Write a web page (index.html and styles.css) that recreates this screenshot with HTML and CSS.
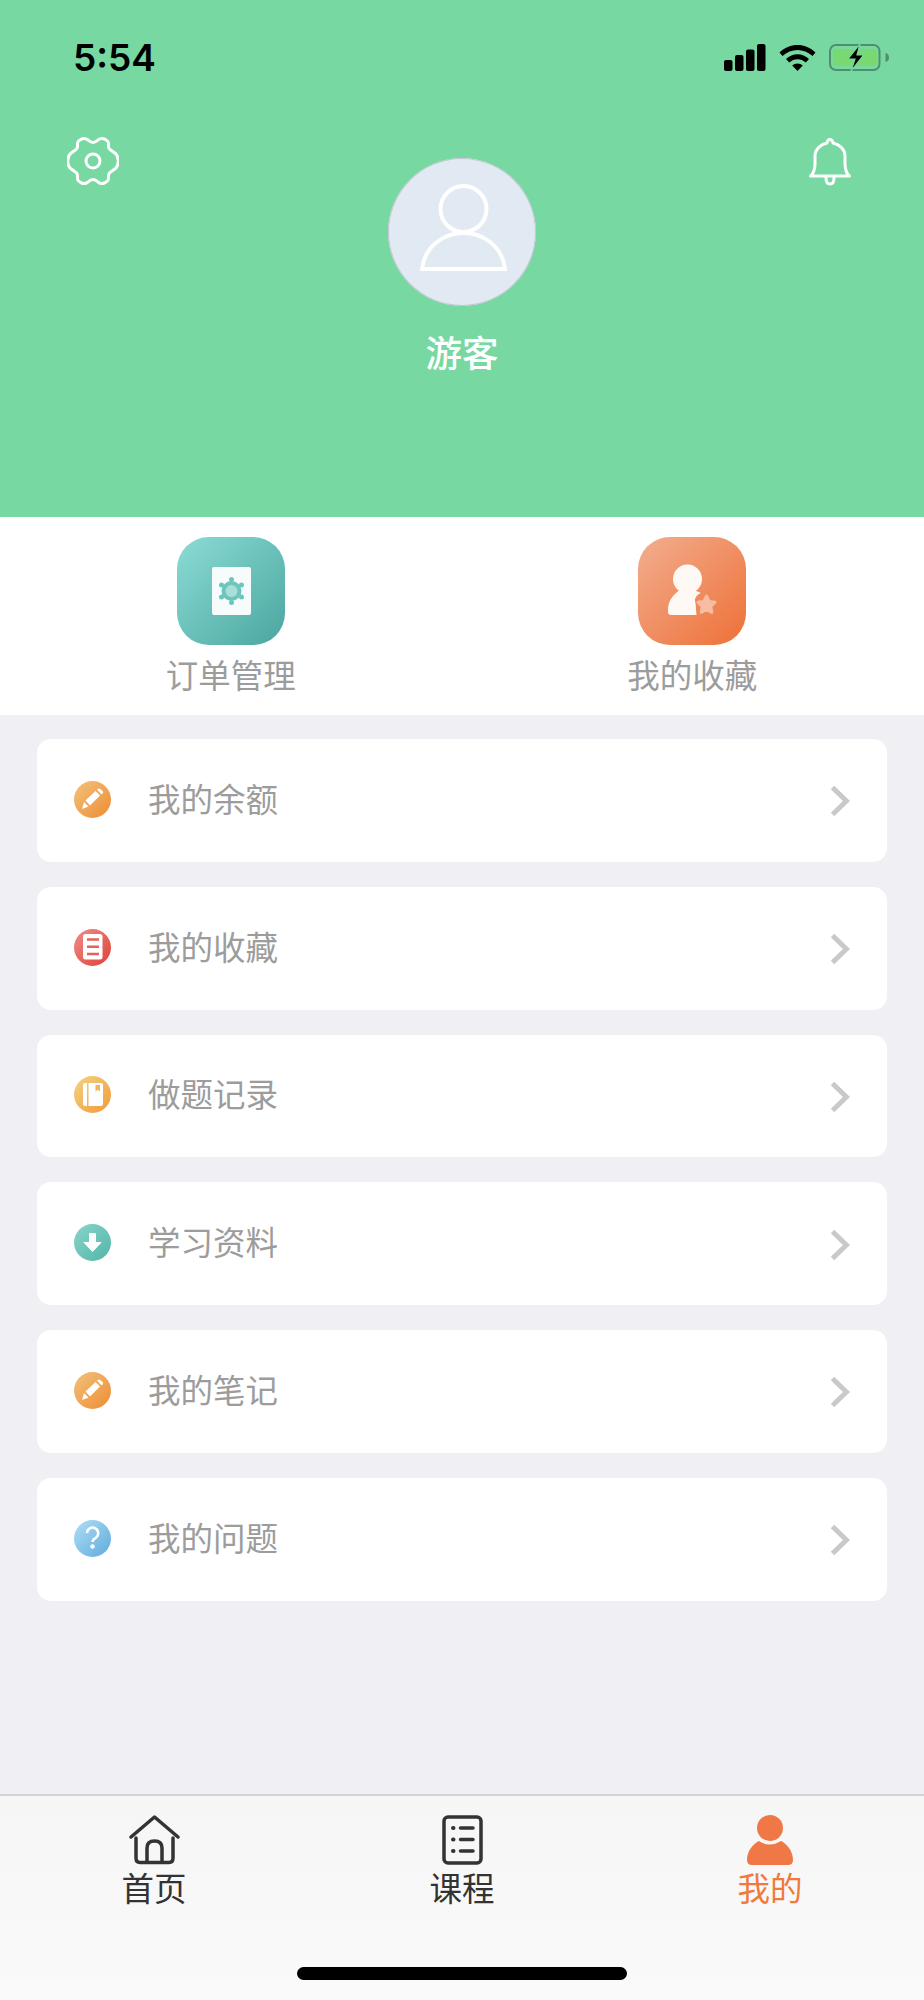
FILE: index.html
```html
<!DOCTYPE html>
<html lang="zh">
<head>
<meta charset="utf-8">
<title>我的</title>
<link rel="stylesheet" href="styles.css">
</head>
<body>
<div class="page">
  <header class="hero">
    <div class="status">
      <span class="time">5:54</span>
      <div class="status-icons">
        <svg class="ic-signal" width="42" height="27" viewBox="0 0 42 27"><rect x="0" y="16" width="8.500" height="11" rx="2"/><rect x="11" y="11" width="8.500" height="16" rx="2"/><rect x="22" y="5.500" width="8.500" height="21.500" rx="2"/><rect x="33" y="0" width="8.500" height="27" rx="2"/></svg>
        <svg class="ic-wifi" width="37" height="27" viewBox="0 0 37 27"><path d="M0.500 8.500C10.500 -1.500 26.500 -1.500 36.500 8.500L33.500 12C25 4 12 4 3.500 12Z"/><path d="M7 15C13.500 8.500 23.500 8.500 30 15L26.800 18.500C22 14 15 14 10.200 18.500Z"/><path d="M13.200 21.500C16 18.700 21 18.700 23.800 21.500L18.500 27Z"/></svg>
        <svg class="ic-battery" width="60" height="27" viewBox="0 0 60 27"><rect x="1" y="1" width="49.500" height="25" rx="6" fill="none" stroke="#4f8f6e" stroke-width="2"/><rect x="4" y="5" width="44" height="17" rx="2.500" fill="#7ad870"/><path d="M56.500 9C58.500 9.500 60 11 60 13.500C60 16 58.500 17.500 56.500 18Z" fill="#4f8f6e"/><path d="M31 0L19 15H26L22 27L34.500 11H28Z" fill="#000" stroke="#77d8a2" stroke-width="1.200"/></svg>
      </div>
    </div>
    <div class="hero-row">
      <svg class="ic-gear" width="52" height="50" viewBox="-26 -25 52 50"><path d="M0 -18.500Q2.500 -18.500 5 -21Q8 -23.500 11.500 -22L13.500 -20.800Q16 -19.300 15.500 -16.300Q15 -12.500 18 -10.800L22.500 -7.500Q25.300 -4.500 25.300 0Q25.300 4.500 22.500 7.500L18 10.800Q15 12.500 15.500 16.300Q16 19.300 13.500 20.800L11.500 22Q8 23.500 5 21Q2.500 18.500 0 18.500Q-2.500 18.500 -5 21Q-8 23.500 -11.500 22L-13.500 20.800Q-16 19.300 -15.500 16.300Q-15 12.500 -18 10.800L-22.500 7.500Q-25.300 4.500 -25.300 0Q-25.300 -4.500 -22.500 -7.500L-18 -10.800Q-15 -12.500 -15.500 -16.300Q-16 -19.300 -13.500 -20.800L-11.500 -22Q-8 -23.500 -5 -21Q-2.500 -18.500 0 -18.500Z"/><circle r="7"/></svg>
      <div class="profile">
        <div class="avatar">
          <svg width="148" height="148" viewBox="0 0 148 148"><circle cx="75.500" cy="51" r="23"/><path d="M34 111C37 87 57 75 75.500 75C94 75 114 87 117 111Z"/></svg>
        </div>
        <div class="name">游客</div>
      </div>
      <svg class="ic-bell" width="44" height="48" viewBox="0 0 44 48"><path d="M2.500 38Q7 34 7 26V18C7 11 13 6.500 19 5Q19.500 1.500 22 1.500Q24.500 1.500 25 5C31 6.500 37 11 37 18V26Q37 34 41.500 38Z"/><path d="M18 40Q18 46 22 46Q26 46 26 40"/></svg>
    </div>
  </header>

  <section class="shortcuts">
    <div class="shortcut">
      <div class="tile tile-teal">
        <svg width="108" height="108" viewBox="0 0 108 108"><rect x="35" y="30" width="39" height="48" rx="2" fill="#f6fcfb"/><g fill="#6cc6bc"><circle cx="54.500" cy="54" r="10"/><circle cx="54.500" cy="42.500" r="2.500"/><circle cx="54.500" cy="65.500" r="2.500"/><circle cx="44.500" cy="48" r="2.500"/><circle cx="64.500" cy="48" r="2.500"/><circle cx="44.500" cy="60" r="2.500"/><circle cx="64.500" cy="60" r="2.500"/></g><circle cx="54.500" cy="54" r="6" fill="#a8dfd8"/></svg>
      </div>
      <div class="shortcut-label">订单管理</div>
    </div>
    <div class="shortcut">
      <div class="tile tile-orange">
        <svg width="108" height="108" viewBox="0 0 108 108"><circle cx="49.500" cy="42" r="14.500" fill="#fff9f5"/><path d="M30 73C30 63 36 57 42 53H56L63 56C58 58 56 62 57.500 66L58.500 78H33Q30 78 30 75Z" fill="#fff9f5"/><path d="M68.500 59L71.100 64.400L77 65.200L72.800 69.400L73.800 75.300L68.500 72.500L63.200 75.300L64.200 69.400L60 65.200L65.900 64.400Z" fill="#f7bda3" stroke="#f7bda3" stroke-width="3" stroke-linejoin="round"/></svg>
      </div>
      <div class="shortcut-label">我的收藏</div>
    </div>
  </section>

  <main class="menu">
    <a class="row">
      <svg class="row-icon" width="37" height="37" viewBox="0 0 37 37"><defs><linearGradient id="gPen" x1="0" y1="0" x2="1" y2="1"><stop offset="0" stop-color="#f2c27c"/><stop offset="1" stop-color="#ee8c33"/></linearGradient></defs><circle cx="18.500" cy="18.500" r="18.500" fill="url(#gPen)"/><path d="M8 28L10 21L14.500 25.500Z" fill="#fff"/><path d="M11.500 19.500L21.500 10L26 14.500L16 24.500Z" fill="#fff"/><path d="M23 8.500L25 7.500Q26 7.500 29 10.500Q29.500 12 28 13L27.300 13.300Z" fill="#fff"/></svg>
      <span class="row-label">我的余额</span>
      <svg class="chevron" width="20" height="32" viewBox="0 0 20 32"><path d="M2.500 2.500L16.500 16L2.500 29.500"/></svg>
    </a>
    <a class="row">
      <svg class="row-icon" width="37" height="37" viewBox="0 0 37 37"><defs><linearGradient id="gList" x1="0" y1="0" x2="1" y2="1"><stop offset="0" stop-color="#ee8f8a"/><stop offset="1" stop-color="#df3f37"/></linearGradient></defs><circle cx="18.500" cy="18.500" r="18.500" fill="url(#gList)"/><rect x="9" y="5" width="19.500" height="25.500" rx="2.500" fill="#fff"/><path d="M13 10.500H25M13 17.800H25M13 25H25" stroke="#e6625a" stroke-width="2.400"/></svg>
      <span class="row-label">我的收藏</span>
      <svg class="chevron" width="20" height="32" viewBox="0 0 20 32"><path d="M2.500 2.500L16.500 16L2.500 29.500"/></svg>
    </a>
    <a class="row">
      <svg class="row-icon" width="37" height="37" viewBox="0 0 37 37"><defs><linearGradient id="gBook" x1="0" y1="0" x2="1" y2="1"><stop offset="0" stop-color="#f4d384"/><stop offset="1" stop-color="#f09a38"/></linearGradient></defs><circle cx="18.500" cy="18.500" r="18.500" fill="url(#gBook)"/><path d="M9 9Q9 7 11 7H13V30H11Q9 30 9 28Z" fill="#fff"/><path d="M14.500 7H27Q29 7 29 9V28Q29 30 27 30H14.500Z" fill="#fff"/><path d="M21.500 9H26V15.500L23.750 13.800L21.500 15.500Z" fill="#f3b45c"/></svg>
      <span class="row-label">做题记录</span>
      <svg class="chevron" width="20" height="32" viewBox="0 0 20 32"><path d="M2.500 2.500L16.500 16L2.500 29.500"/></svg>
    </a>
    <a class="row">
      <svg class="row-icon" width="37" height="37" viewBox="0 0 37 37"><defs><linearGradient id="gDown" x1="0" y1="0" x2="1" y2="1"><stop offset="0" stop-color="#8ad4ca"/><stop offset="1" stop-color="#50b6a6"/></linearGradient></defs><circle cx="18.500" cy="18.500" r="18.500" fill="url(#gDown)"/><path d="M15.500 9.500H21.500V18.500H27L18.500 27.500L10 18.500H15.500Z" fill="#fff" stroke="#fff" stroke-linejoin="round"/></svg>
      <span class="row-label">学习资料</span>
      <svg class="chevron" width="20" height="32" viewBox="0 0 20 32"><path d="M2.500 2.500L16.500 16L2.500 29.500"/></svg>
    </a>
    <a class="row">
      <svg class="row-icon" width="37" height="37" viewBox="0 0 37 37"><circle cx="18.500" cy="18.500" r="18.500" fill="url(#gPen)"/><path d="M8 28L10 21L14.500 25.500Z" fill="#fff"/><path d="M11.500 19.500L21.500 10L26 14.500L16 24.500Z" fill="#fff"/><path d="M23 8.500L25 7.500Q26 7.500 29 10.500Q29.500 12 28 13L27.300 13.300Z" fill="#fff"/></svg>
      <span class="row-label">我的笔记</span>
      <svg class="chevron" width="20" height="32" viewBox="0 0 20 32"><path d="M2.500 2.500L16.500 16L2.500 29.500"/></svg>
    </a>
    <a class="row">
      <svg class="row-icon" width="37" height="37" viewBox="0 0 37 37"><defs><linearGradient id="gHelp" x1="0" y1="0" x2="1" y2="1"><stop offset="0" stop-color="#b0def6"/><stop offset="1" stop-color="#5eabdc"/></linearGradient></defs><circle cx="18.500" cy="18.500" r="18.500" fill="url(#gHelp)"/><path d="M13 13A5.600 5.600 0 1 1 21.800 17.800Q18.500 19.500 18.500 22" fill="none" stroke="#fff" stroke-width="2.500"/><circle cx="18.500" cy="26.500" r="2.200" fill="#fff"/></svg>
      <span class="row-label">我的问题</span>
      <svg class="chevron" width="20" height="32" viewBox="0 0 20 32"><path d="M2.500 2.500L16.500 16L2.500 29.500"/></svg>
    </a>
  </main>

  <nav class="tabbar">
    <div class="tabs">
      <div class="tab">
        <svg class="tab-icon" width="51" height="50" viewBox="0 0 51 50"><path d="M2 22L25.500 2L49 22"/><path d="M7 23V43Q7 47.500 11 47.500H40Q44 47.500 44 43V23"/><path d="M18 47V33Q18 26 25.500 26Q33 26 33 33V47"/></svg>
        <span class="tab-label">首页</span>
      </div>
      <div class="tab">
        <svg class="tab-icon" width="41" height="50" viewBox="0 0 41 50"><rect x="2" y="2" width="37" height="46" rx="4"/><path d="M11 13H11.500M11 24.500H11.500M11 36H11.500" stroke-width="4"/><path d="M18.500 13H31M18.500 24.500H31M18.500 36H31"/></svg>
        <span class="tab-label">课程</span>
      </div>
      <div class="tab tab-active">
        <svg width="46" height="50" viewBox="0 0 46 50"><circle cx="23" cy="13" r="13"/><path d="M0 45C0 36 6 29 12 26Q23 33 34 26C40 29 46 36 46 45Q46 50 41 50H5Q0 50 0 45Z"/></svg>
        <span class="tab-label">我的</span>
      </div>
    </div>
    <div class="home-indicator"></div>
  </nav>
</div>
</body>
</html>
```
FILE: styles.css
```css
* { box-sizing: border-box; }
html, body { margin: 0; padding: 0; }
body {
  background: #efeff4;
  font-family: "Noto Sans CJK SC", "Noto Sans", sans-serif;
}
svg { display: block; flex: none; }

.page {
  width: 924px;
  height: 2000px;
  display: flex;
  flex-direction: column;
  background: #efeff4;
  overflow: hidden;
}

/* Hero */
.hero {
  height: 517px;
  background: #77d8a2;
}
.status {
  height: 114px;
  display: flex;
  align-items: center;
  justify-content: space-between;
  padding: 0 35px 0 73px;
}
.time {
  font-family: Inter, "Liberation Sans", sans-serif;
  font-size: 37px;
  font-weight: 600;
  color: #000;
}
.status-icons {
  display: flex;
  align-items: center;
  gap: 13px;
}
.ic-signal, .ic-wifi { fill: #000; }
.hero-row {
  display: grid;
  grid-template-columns: 1fr auto 1fr;
  align-items: start;
  padding: 24px 67px 0;
}
.ic-gear, .ic-bell {
  fill: none;
  stroke: #fff;
  stroke-width: 3;
  stroke-linejoin: round;
  stroke-linecap: round;
}
.ic-gear { margin-top: -2px; }
.ic-bell {
  justify-self: end;
  margin-right: 5px;
}
.profile {
  display: flex;
  flex-direction: column;
  align-items: center;
  padding-top: 20px;
}
.avatar {
  width: 148px;
  height: 148px;
  border-radius: 50%;
  background: #e1e9f2;
  box-shadow: inset 0 0 0 1px #c4c6d2;
}
.avatar svg {
  fill: none;
  stroke: #fff;
  stroke-width: 4;
}
.name {
  margin-top: 24px;
  font-size: 36.5px;
  line-height: 44px;
  font-weight: 500;
  color: #fff;
}

/* Shortcuts */
.shortcuts {
  height: 198px;
  display: grid;
  grid-template-columns: 1fr 1fr;
  padding: 20px 1px 0 0;
  background: #fff;
}
.shortcut {
  display: flex;
  flex-direction: column;
  align-items: center;
}
.tile {
  width: 108px;
  height: 108px;
  border-radius: 32px;
}
.tile-teal { background: linear-gradient(135deg, #8bdcd5, #4aa69f); }
.tile-orange { background: linear-gradient(135deg, #f2ae8f, #ee7037); }
.shortcut-label {
  margin-top: 9px;
  font-size: 32.5px;
  line-height: 40px;
  color: #9c9c9c;
}

/* Menu */
.menu {
  display: flex;
  flex-direction: column;
  gap: 25px;
  padding: 24px 37px 0;
}
.row {
  height: 122.75px;
  display: flex;
  align-items: center;
  padding: 0 37px;
  background: #fff;
  border-radius: 14px;
}
.row-icon { margin-bottom: 2px; }
.row-label {
  margin: 0 0 5px 37px;
  font-size: 32.5px;
  line-height: 40px;
  color: #9c9c9c;
}
.chevron {
  margin: 2px 0 0 auto;
  fill: none;
  stroke: #c9c9c9;
  stroke-width: 5;
}

/* Tab bar */
.tabbar {
  margin-top: auto;
  height: 206px;
  border-top: 2px solid #d2d2d6;
  background: linear-gradient(180deg, #f6f6f7, #fafafa);
  padding-top: 19px;
}
.tabs {
  display: grid;
  grid-template-columns: repeat(3, 1fr);
}
.tab {
  display: flex;
  flex-direction: column;
  align-items: center;
  color: #333;
}
.tab-icon {
  fill: none;
  stroke: #333;
  stroke-width: 3.5;
  stroke-linecap: round;
  stroke-linejoin: round;
}
.tab-active { color: #f07a3c; }
.tab-active svg { fill: #f07746; }
.tab-label {
  margin-top: 2px;
  font-size: 32.5px;
  line-height: 40px;
}
.home-indicator {
  width: 330px;
  height: 13px;
  margin: 60px auto 0;
  border-radius: 7px;
  background: #000;
}
```
